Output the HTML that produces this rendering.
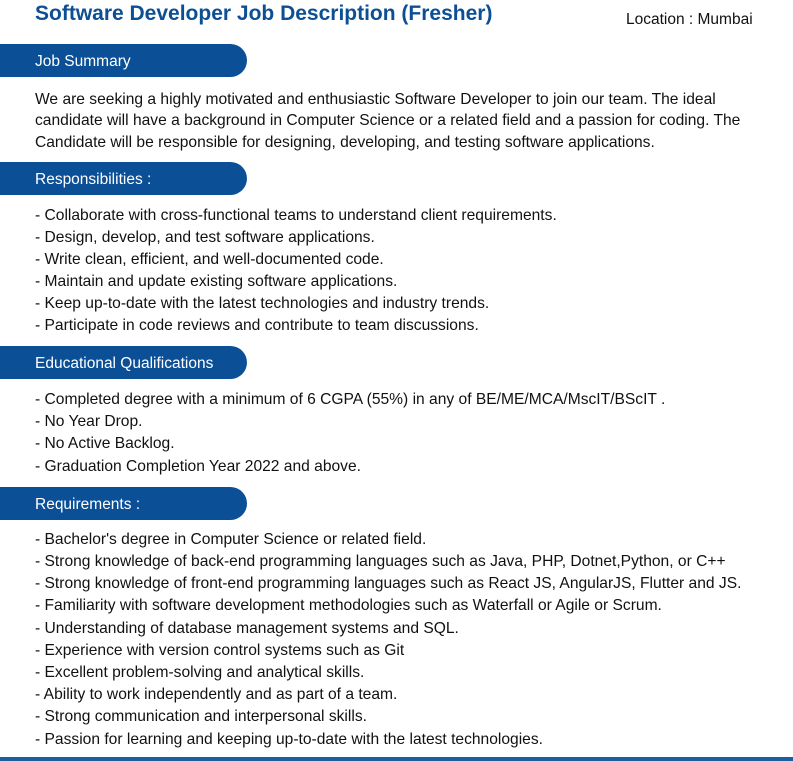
<!DOCTYPE html>
<html><head><style>
body{margin:0;width:793px;height:761px;background:#fff;font-family:"Liberation Sans",Arial,sans-serif;position:relative;overflow:hidden;color:#111}
.t{position:absolute;left:35px;top:2px;font-size:21px;font-weight:bold;color:#0d4f93}
.loc{position:absolute;left:626px;top:11px;font-size:15.5px}
.pill{position:absolute;left:0;width:247px;height:33px;background:#0b4f96;border-radius:0 17px 17px 0;color:#fff;font-size:15.5px;line-height:35px;padding-left:35px;box-sizing:border-box}
.l{position:absolute;left:35px;font-size:15.6px;white-space:nowrap;line-height:18px}
.bot{position:absolute;left:0;right:0;top:757px;height:4px;background:#1b5fa0}
</style></head><body>
<div class="t">Software Developer Job Description (Fresher)</div>
<div class="loc">Location : Mumbai</div>
<div class="pill" style="top:44px">Job Summary</div>
<div class="l" style="top:91px">We are seeking a highly motivated and enthusiastic Software Developer to join our team. The ideal</div>
<div class="l" style="top:112px">candidate will have a background in Computer Science or a related field and a passion for coding. The</div>
<div class="l" style="top:134px">Candidate will be responsible for designing, developing, and testing software applications.</div>
<div class="pill" style="top:162px">Responsibilities :</div>
<div class="l" style="top:207px">- Collaborate with cross-functional teams to understand client requirements.</div>
<div class="l" style="top:229px">- Design, develop, and test software applications.</div>
<div class="l" style="top:251px">- Write clean, efficient, and well-documented code.</div>
<div class="l" style="top:273px">- Maintain and update existing software applications.</div>
<div class="l" style="top:295px">- Keep up-to-date with the latest technologies and industry trends.</div>
<div class="l" style="top:317px">- Participate in code reviews and contribute to team discussions.</div>
<div class="pill" style="top:346px">Educational Qualifications</div>
<div class="l" style="top:391px">- Completed degree with a minimum of 6 CGPA (55%) in any of BE/ME/MCA/MscIT/BScIT .</div>
<div class="l" style="top:413px">- No Year Drop.</div>
<div class="l" style="top:435px">- No Active Backlog.</div>
<div class="l" style="top:458px">- Graduation Completion Year 2022 and above.</div>
<div class="pill" style="top:487px">Requirements :</div>
<div class="l" style="top:531px">- Bachelor's degree in Computer Science or related field.</div>
<div class="l" style="top:553px">- Strong knowledge of back-end programming languages such as Java, PHP, Dotnet,Python, or C++</div>
<div class="l" style="top:575px">- Strong knowledge of front-end programming languages such as React JS, AngularJS, Flutter and JS.</div>
<div class="l" style="top:597px">- Familiarity with software development methodologies such as Waterfall or Agile or Scrum.</div>
<div class="l" style="top:620px">- Understanding of database management systems and SQL.</div>
<div class="l" style="top:642px">- Experience with version control systems such as Git</div>
<div class="l" style="top:664px">- Excellent problem-solving and analytical skills.</div>
<div class="l" style="top:686px">- Ability to work independently and as part of a team.</div>
<div class="l" style="top:708px">- Strong communication and interpersonal skills.</div>
<div class="l" style="top:731px">- Passion for learning and keeping up-to-date with the latest technologies.</div>
<div class="bot"></div>
</body></html>
